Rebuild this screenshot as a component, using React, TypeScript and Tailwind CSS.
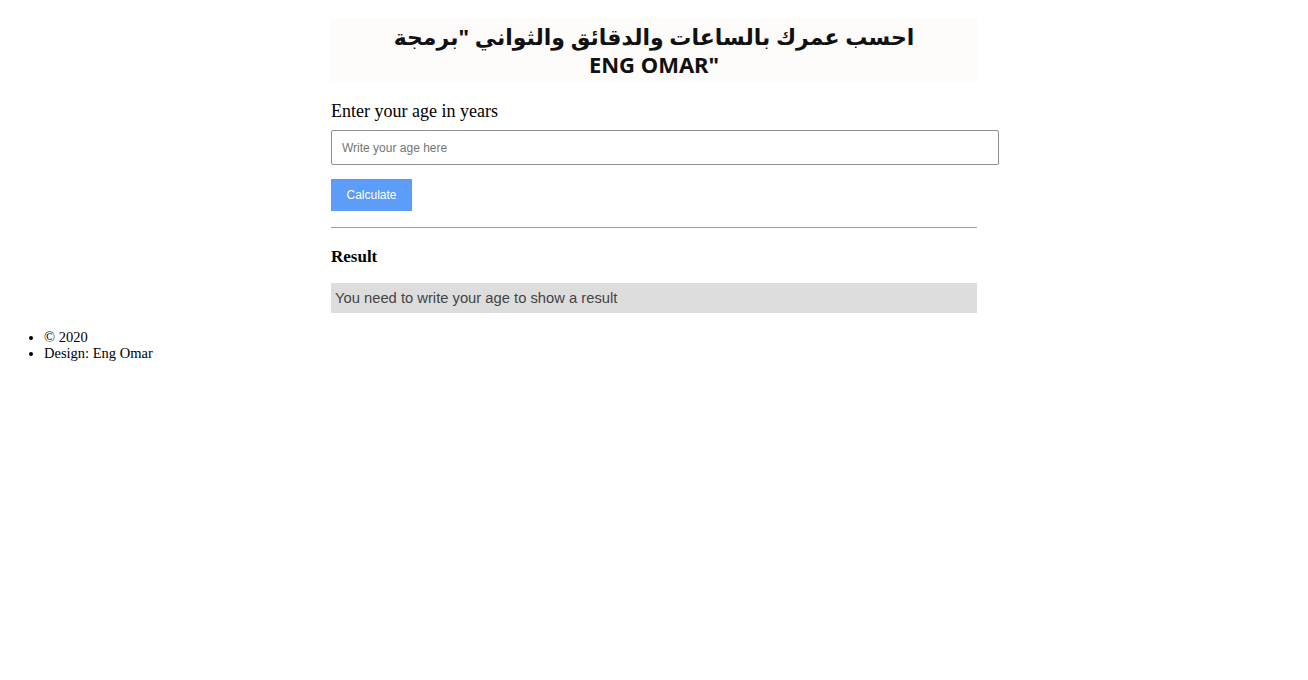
export default function App() {
  return (
    <div className="min-h-[680px] bg-white pt-[18px] font-['Liberation_Serif',serif] text-black">
      <div className="mx-auto w-[646px]">
        <header className="bg-[#fdfcfb] py-[4px] text-center">
          <h1 className="font-['Noto_Sans','DejaVu_Sans',sans-serif] text-[22px] font-bold leading-[28px] text-[#111]">
            <span className="block">احسب عمرك بالساعات والدقائق والثواني "برمجة</span>
            <span className="block">ENG OMAR"</span>
          </h1>
        </header>

        <label className="mt-[18px] block text-[18px] leading-[22px]">Enter your age in years</label>
        <input
          type="text"
          placeholder="Write your age here"
          className="mt-[8px] block h-[35px] w-[668px] rounded-[2px] border border-[#8f8f8f] px-[10px] font-['Liberation_Sans',sans-serif] text-[12px] outline-none placeholder:text-[#757575]"
        />
        <button className="mt-[14px] block h-[32px] w-[81px] bg-[#5c9dfa] font-['Liberation_Sans',sans-serif] text-[12px] text-white">
          Calculate
        </button>

        <hr className="mt-[16px] border-t border-[#a0a0a0]" />

        <h3 className="mt-[19px] text-[17px] font-bold leading-[20px]">Result</h3>
        <div className="mt-[16px] flex h-[30px] items-center bg-[#dddddd] px-[4px] font-['Liberation_Sans',sans-serif] text-[14.75px] text-[#444]">
          You need to write your age to show a result
        </div>
      </div>

      <ul className="mt-[16px] list-disc pl-[44px] text-[14.5px] leading-[16px]">
        <li>© 2020</li>
        <li>Design: Eng Omar</li>
      </ul>
    </div>
  );
}
